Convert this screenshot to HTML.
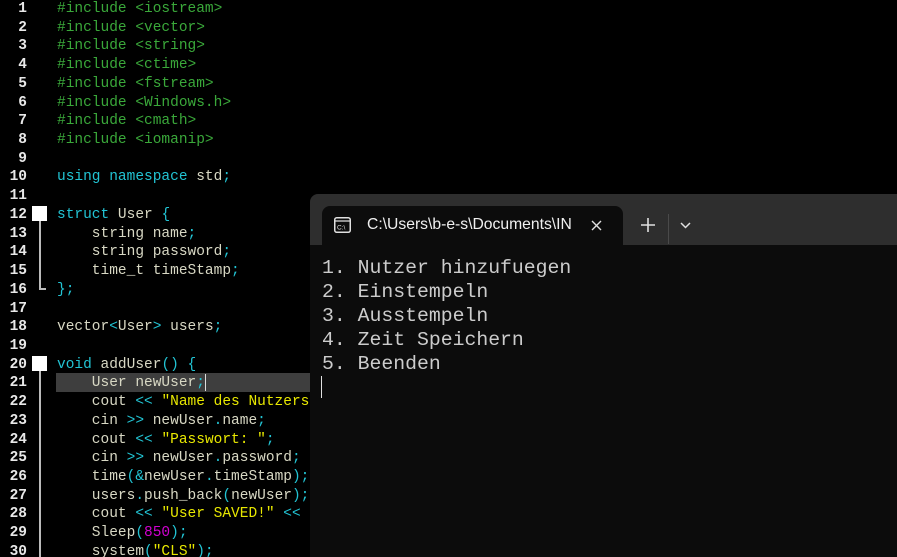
<!DOCTYPE html>
<html><head><meta charset="utf-8"><style>
html,body{margin:0;padding:0;background:#000;width:897px;height:557px;overflow:hidden;position:relative}
.code{position:absolute;left:0;top:0px;font-family:"Liberation Mono",monospace;font-size:14.5px;line-height:18.72px;color:#d8d8c4;white-space:pre}
.ln{position:absolute;left:0;width:27px;text-align:right;color:#e8e8e8;font-weight:bold}
.tx{position:absolute;left:57px}
.i{color:#3aa83a}.k{color:#22c4d4}.s{color:#e8e800}.n{color:#d000d0}.p{color:#22c4d4}
.hl{position:absolute;left:56px;top:373px;width:254px;height:19px;background:#3e3e3e}
.box{position:absolute;left:32px;width:15px;height:15px;background:#fff}
.vl{position:absolute;left:39px;width:2px;background:#bbb}
.term{position:absolute;left:310px;top:194px;width:600px;height:380px;background:#0c0c0c;border-radius:8px 0 0 0;overflow:hidden}
.bar{position:absolute;left:0;top:0;right:0;height:51px;background:#2e2e2e}
.tab{position:absolute;left:12px;top:12px;width:301px;height:39px;background:#0c0c0c;border-radius:8px 8px 0 0}
.title{position:absolute;left:45px;top:10px;font-family:"Liberation Sans",sans-serif;font-size:15.7px;color:#f0f0f0;white-space:nowrap}
.out{position:absolute;left:12px;top:62px;font-family:"Liberation Mono",monospace;font-size:19.8px;line-height:24px;color:#cccccc;white-space:pre}
</style></head><body>
<div class="hl"></div>
<div style="position:absolute;left:205px;top:374px;width:1px;height:17px;background:#ddd"></div>
<div class="box" style="top:206px"></div>
<div class="vl" style="top:221px;height:69px"></div>
<div style="position:absolute;left:39px;top:288px;width:7px;height:2px;background:#bbb"></div>
<div class="box" style="top:356px"></div>
<div class="vl" style="top:371px;height:186px"></div>
<div class="code" id="c"></div>
<script>
var L=[
'<span class="i">#include &lt;iostream&gt;</span>',
'<span class="i">#include &lt;vector&gt;</span>',
'<span class="i">#include &lt;string&gt;</span>',
'<span class="i">#include &lt;ctime&gt;</span>',
'<span class="i">#include &lt;fstream&gt;</span>',
'<span class="i">#include &lt;Windows.h&gt;</span>',
'<span class="i">#include &lt;cmath&gt;</span>',
'<span class="i">#include &lt;iomanip&gt;</span>',
'',
'<span class="k">using namespace</span> std<span class="p">;</span>',
'',
'<span class="k">struct</span> User <span class="p">{</span>',
'    string name<span class="p">;</span>',
'    string password<span class="p">;</span>',
'    time_t timeStamp<span class="p">;</span>',
'<span class="p">};</span>',
'',
'vector<span class="p">&lt;</span>User<span class="p">&gt;</span> users<span class="p">;</span>',
'',
'<span class="k">void</span> addUser<span class="p">()</span> <span class="p">{</span>',
'    User newUser<span class="p">;</span>',
'    cout <span class="p">&lt;&lt;</span> <span class="s">"Name des Nutzers</span>',
'    cin <span class="p">&gt;&gt;</span> newUser<span class="p">.</span>name<span class="p">;</span>',
'    cout <span class="p">&lt;&lt;</span> <span class="s">"Passwort: "</span><span class="p">;</span>',
'    cin <span class="p">&gt;&gt;</span> newUser<span class="p">.</span>password<span class="p">;</span>',
'    time<span class="p">(&amp;</span>newUser<span class="p">.</span>timeStamp<span class="p">);</span>',
'    users<span class="p">.</span>push_back<span class="p">(</span>newUser<span class="p">);</span>',
'    cout <span class="p">&lt;&lt;</span> <span class="s">"User SAVED!"</span> <span class="p">&lt;&lt;</span>',
'    Sleep<span class="p">(</span><span class="n">850</span><span class="p">);</span>',
'    system<span class="p">(</span><span class="s">"CLS"</span><span class="p">);</span>'];
var h='';for(var j=0;j<L.length;j++){var t=j*18.72;h+='<div class="ln" style="top:'+t+'px">'+(j+1)+'</div><div class="tx" style="top:'+t+'px">'+L[j]+'</div>';}
document.getElementById('c').innerHTML=h;
</script>
<div class="term">
<div class="bar"></div>
<div class="tab">
<svg style="position:absolute;left:12px;top:11px" width="17" height="16" viewBox="0 0 17 16"><rect x="0.75" y="0.75" width="15.5" height="14.5" rx="2" fill="none" stroke="#e0e0e0" stroke-width="1.5"/><line x1="1" y1="4" x2="16" y2="4" stroke="#e0e0e0" stroke-width="1.3"/><text x="3" y="12.5" font-family="Liberation Sans" font-size="6.5" fill="#e0e0e0">C:\</text></svg>
<div class="title">C:\Users\b-e-s\Documents\IN</div>
<svg style="position:absolute;left:269px;top:14px" width="11" height="11"><path d="M1 1L10 10M10 1L1 10" stroke="#e0e0e0" stroke-width="1.4"/></svg>
</div>
<svg style="position:absolute;left:331px;top:24px" width="14" height="14"><path d="M7 0V14M0 7H14" stroke="#e0e0e0" stroke-width="1.6"/></svg>
<div style="position:absolute;left:358px;top:20px;width:1px;height:30px;background:#4a4a4a"></div>
<svg style="position:absolute;left:370px;top:28px" width="11" height="7"><path d="M1 1L5.5 5.5L10 1" stroke="#e0e0e0" stroke-width="1.5" fill="none"/></svg>
<div class="out">1. Nutzer hinzufuegen
2. Einstempeln
3. Ausstempeln
4. Zeit Speichern
5. Beenden</div>
<div style="position:absolute;left:11px;top:182px;width:1px;height:22px;background:#e0e0e0"></div>
</div>
</body></html>
